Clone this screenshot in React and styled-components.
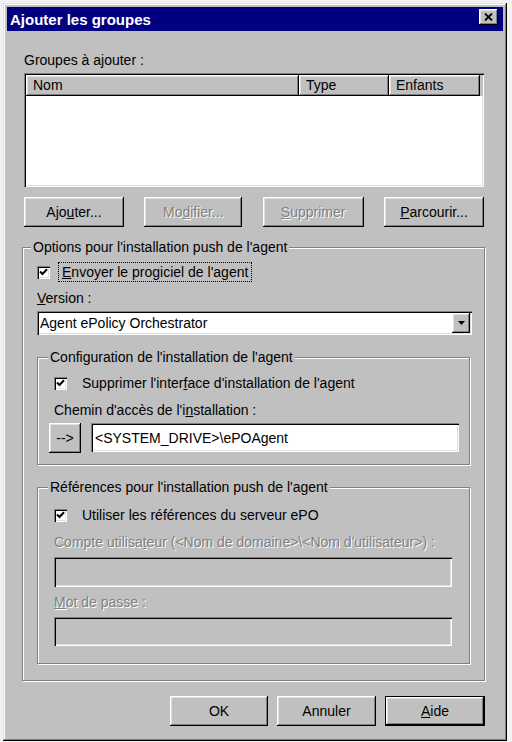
import React from 'react';
import styled, { createGlobalStyle, css } from 'styled-components';

const GlobalStyle = createGlobalStyle`
  html, body {
    margin: 0;
    padding: 0;
    background: #f2f2f2;
  }
  body {
    padding: 3px;
    font-family: "Liberation Sans", Arial, sans-serif;
    font-size: 14px;
    color: #000;
  }
`;

const raised = css`
  box-shadow: inset -1px -1px 0 #000, inset 1px 1px 0 #fff, inset -2px -2px 0 #808080,
    inset 2px 2px 0 #dfdfdf;
`;

const sunken = css`
  box-shadow: inset 1px 1px 0 #808080, inset 2px 2px 0 #000, inset -1px -1px 0 #fff,
    inset -2px -2px 0 #dfdfdf;
`;

const Window = styled.div`
  box-sizing: border-box;
  width: 504px;
  height: 738px;
  padding: 4px;
  background: #c0c0c0;
  display: flex;
  flex-direction: column;
  box-shadow: inset -1px -1px 0 #000, inset 1px 1px 0 #dfdfdf, inset -2px -2px 0 #808080,
    inset 2px 2px 0 #fff;
`;

const TitleBar = styled.div`
  height: 24px;
  background: #000080;
  color: #fff;
  font-weight: 700;
  font-size: 15px;
  display: flex;
  align-items: center;
  justify-content: space-between;
  padding: 0 5px 0 3px;
`;

const CloseButton = styled.div`
  width: 19px;
  height: 16px;
  margin-top: -4px;
  background: #c0c0c0;
  display: flex;
  align-items: center;
  justify-content: center;
  ${raised};
`;

const Content = styled.div`
  display: flex;
  flex-direction: column;
  padding: 0 19px 0 17px;
`;

const Label = styled.div`
  line-height: 16px;
  height: 16px;
  white-space: nowrap;
  margin-top: ${(p) => p.$mt || 0}px;
  margin-left: ${(p) => p.$ml || 0}px;
  color: ${(p) => (p.$disabled ? '#808080' : '#000')};
  text-shadow: ${(p) => (p.$disabled ? '1px 1px 0 #fff' : 'none')};
`;

const ListView = styled.div`
  box-sizing: border-box;
  width: 460px;
  height: 114px;
  margin-top: 5px;
  padding: 2px;
  background: #fff;
  ${sunken};
`;

const HeaderRow = styled.div`
  display: flex;
  height: 21px;
  background: #c0c0c0;
  margin-right: -1px;
`;

const HeaderCell = styled.div`
  box-sizing: border-box;
  width: ${(p) => p.$w}px;
  height: 21px;
  line-height: 21px;
  padding-left: 7px;
  ${raised};
`;

const ButtonRow = styled.div`
  display: flex;
  justify-content: ${(p) => p.$justify || 'space-between'};
  gap: ${(p) => p.$gap || 0}px;
  margin-top: ${(p) => p.$mt || 0}px;
  margin-right: ${(p) => p.$mr || 0}px;
`;

const Button = styled.div`
  box-sizing: border-box;
  width: ${(p) => p.$w}px;
  height: 30px;
  background: #c0c0c0;
  display: flex;
  align-items: center;
  justify-content: center;
  color: ${(p) => (p.$disabled ? '#808080' : '#000')};
  text-shadow: ${(p) => (p.$disabled ? '1px 1px 0 #fff' : 'none')};
  ${(p) =>
    p.$default
      ? css`
          box-shadow: inset 0 0 0 1px #000, inset -2px -2px 0 #000, inset 2px 2px 0 #fff,
            inset -3px -3px 0 #808080, inset 3px 3px 0 #dfdfdf;
        `
      : raised};
`;

const GroupBox = styled.fieldset`
  box-sizing: border-box;
  min-width: 0;
  width: ${(p) => p.$w}px;
  margin: ${(p) => p.$mt}px 0 0 ${(p) => p.$ml || 0}px;
  padding: 0 0 ${(p) => p.$pb}px ${(p) => p.$pl}px;
  border: 1px solid #808080;
  box-shadow: inset 1px 1px 0 #fff, 1px 1px 0 #fff;
  display: flex;
  flex-direction: column;
`;

const Legend = styled.legend`
  margin-left: ${(p) => p.$ml}px;
  padding: 0 2px;
  line-height: 16px;
  background: #c0c0c0;
  position: relative;
`;

const CheckRow = styled.div`
  display: flex;
  align-items: center;
  height: 20px;
  margin-top: ${(p) => p.$mt}px;
  margin-left: ${(p) => p.$ml || 0}px;
`;

const CheckBox = styled.div`
  box-sizing: border-box;
  width: 13px;
  height: 13px;
  background: #fff;
  display: flex;
  align-items: center;
  justify-content: center;
  ${sunken};
`;

const CheckText = styled.span`
  margin-left: ${(p) => (p.$focus ? 8 : 11)}px;
  padding: 0 3px;
  line-height: 18px;
  border: 1px ${(p) => (p.$focus ? 'dotted #000' : 'solid transparent')};
`;

const Combo = styled.div`
  box-sizing: border-box;
  width: 435px;
  height: 24px;
  margin-top: 5px;
  background: #fff;
  display: flex;
  align-items: center;
  justify-content: space-between;
  padding: 2px 2px 2px 3px;
  ${sunken};
`;

const DropButton = styled.div`
  width: 18px;
  height: 20px;
  background: #c0c0c0;
  display: flex;
  align-items: center;
  justify-content: center;
  ${raised};
`;

const FieldRow = styled.div`
  display: flex;
  gap: 10px;
  margin-top: 5px;
`;

const TextField = styled.div`
  box-sizing: border-box;
  width: ${(p) => p.$w}px;
  height: ${(p) => p.$h || 30}px;
  margin-top: ${(p) => p.$mt || 0}px;
  margin-left: ${(p) => p.$ml || 0}px;
  padding: 0 4px;
  display: flex;
  align-items: center;
  background: ${(p) => (p.$disabled ? '#c0c0c0' : '#fff')};
  ${sunken};
`;

const Check = () => (
  <svg width="9" height="9" viewBox="0 0 9 9">
    <path d="M1 3.5 L3.5 6 L8 1.2" fill="none" stroke="#000" strokeWidth="2" />
  </svg>
);

const Checkbox = ({ children, mt, ml, focus }) => (
  <CheckRow $mt={mt} $ml={ml}>
    <CheckBox>
      <Check />
    </CheckBox>
    <CheckText $focus={focus}>{children}</CheckText>
  </CheckRow>
);

const App = () => (
  <>
    <GlobalStyle />
    <Window>
      <TitleBar>
        <span>Ajouter les groupes</span>
        <CloseButton>
          <svg width="9" height="8" viewBox="0 0 9 8">
            <path d="M1 0.5 L8 7.5 M8 0.5 L1 7.5" stroke="#000" strokeWidth="1.8" />
          </svg>
        </CloseButton>
      </TitleBar>
      <Content>
        <Label $mt={21}>Groupes à ajouter :</Label>
        <ListView>
          <HeaderRow>
            <HeaderCell $w={273}>Nom</HeaderCell>
            <HeaderCell $w={90}>Type</HeaderCell>
            <HeaderCell $w={91}>Enfants</HeaderCell>
          </HeaderRow>
        </ListView>
        <ButtonRow $mt={10}>
          <Button $w={100}>
            Ajo<u>u</u>ter...
          </Button>
          <Button $w={98} $disabled>
            Mo<u>d</u>ifier...
          </Button>
          <Button $w={101} $disabled>
            <u>S</u>upprimer
          </Button>
          <Button $w={100}>
            <u>P</u>arcourir...
          </Button>
        </ButtonRow>

        <GroupBox $w={463} $mt={12} $ml={-2} $pl={14} $pb={16}>
          <Legend $ml={-6}>Options pour l'installation push de l'agent</Legend>
          <Checkbox mt={7} focus>
            <u>E</u>nvoyer le progiciel de l'agent
          </Checkbox>
          <Label $mt={8}>
            <u>V</u>ersion :
          </Label>
          <Combo>
            <span>Agent ePolicy Orchestrator</span>
            <DropButton>
              <svg width="7" height="4" viewBox="0 0 7 4">
                <path d="M0 0 H7 L3.5 4 Z" fill="#000" />
              </svg>
            </DropButton>
          </Combo>

          <GroupBox $w={433} $mt={14} $pl={11} $pb={11}>
            <Legend $ml={-1}>Configuration de l'installation de l'agent</Legend>
            <Checkbox mt={8} ml={5}>
              Supprimer l'inter<u>f</u>ace d'installation de l'agent
            </Checkbox>
            <Label $mt={9} $ml={5}>
              Chemin d'accès de l'i<u>n</u>stallation :
            </Label>
            <FieldRow>
              <Button $w={32}>--&gt;</Button>
              <TextField $w={368} $h={29}>
                &lt;SYSTEM_DRIVE&gt;\ePOAgent
              </TextField>
            </FieldRow>
          </GroupBox>

          <GroupBox $w={433} $mt={14} $pl={16} $pb={17}>
            <Legend $ml={-6}>Références pour l'installation push de l'agent</Legend>
            <Checkbox mt={10}>Utiliser les références du serveur ePO</Checkbox>
            <Label $mt={9} $disabled>
              Compte utilisa<u>t</u>eur (&lt;Nom de domaine&gt;\&lt;Nom d'utilisateur&gt;) :
            </Label>
            <TextField $w={398} $mt={7} $disabled />
            <Label $mt={7} $disabled>
              <u>M</u>ot de passe :
            </Label>
            <TextField $w={398} $h={29} $mt={7} $disabled />
          </GroupBox>
        </GroupBox>

        <ButtonRow $justify="flex-end" $gap={9} $mt={15} $mr={-1}>
          <Button $w={98}>OK</Button>
          <Button $w={99}>Annuler</Button>
          <Button $w={100} $default>
            <u>A</u>ide
          </Button>
        </ButtonRow>
      </Content>
    </Window>
  </>
);

export default App;
